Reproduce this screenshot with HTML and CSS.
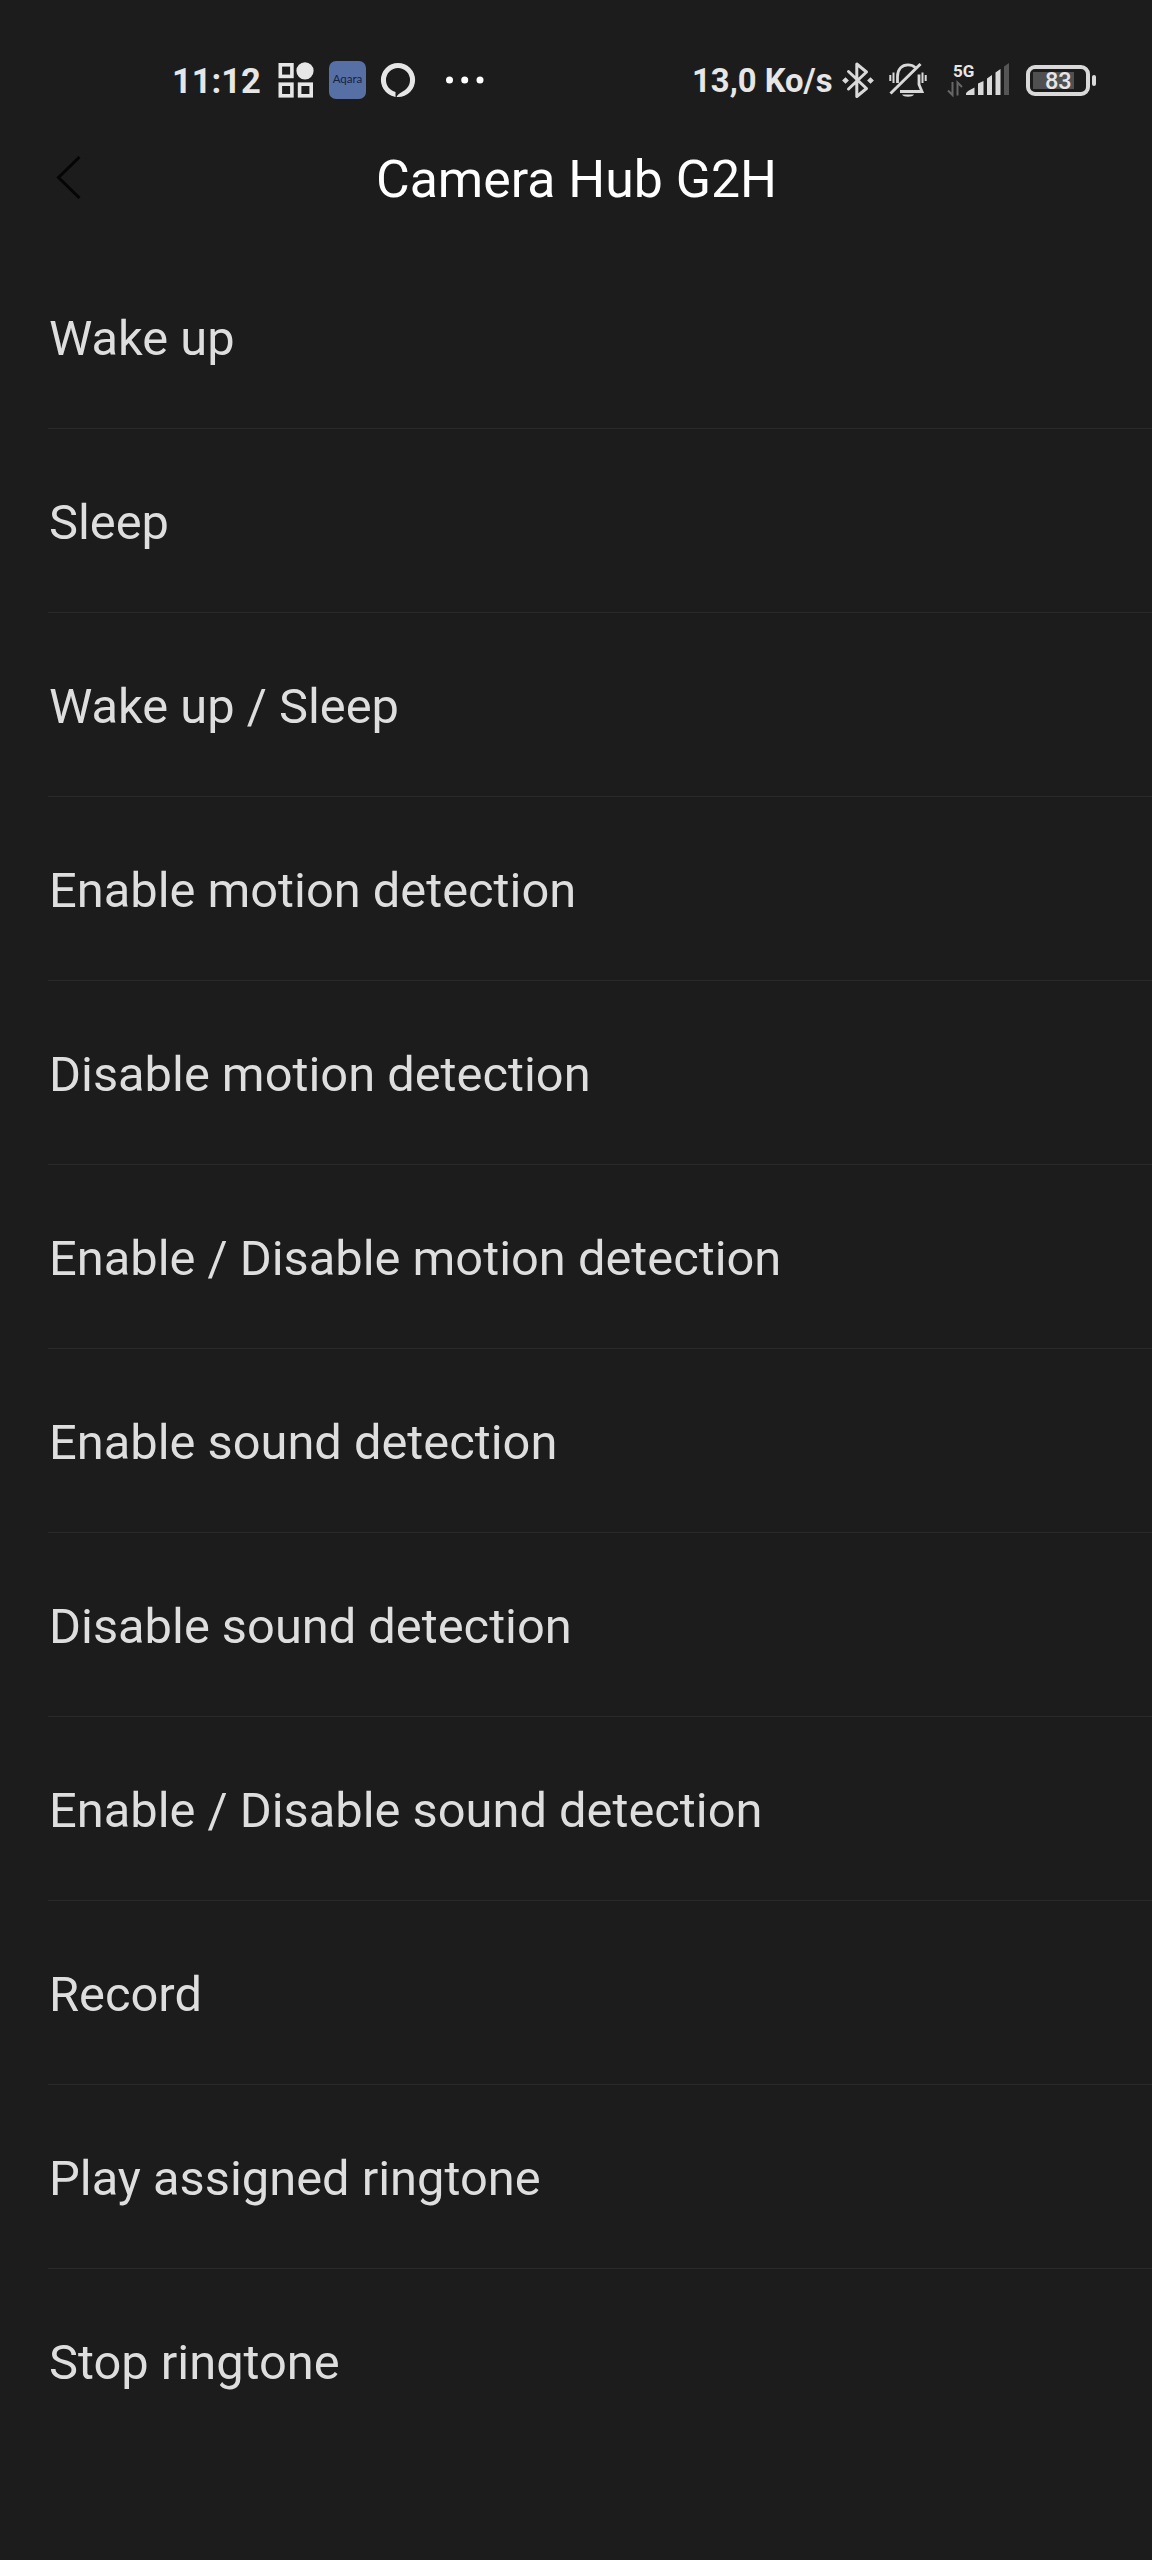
FILE: index.html
```html
<!DOCTYPE html>
<html lang="en">
<head>
    <meta charset="UTF-8">
    <meta name="viewport" content="width=device-width, initial-scale=1.0">
    <title>Camera Hub G2H</title>

    <link rel="stylesheet" href="styles.css">
</head>
<body>
    <div class="status-bar">
        <div class="status-left">
            <span class="time">11:12</span>
            <svg class="icon-apps" width="36" height="40" viewBox="0 0 36 40" fill="none" stroke="#e6e6e6" stroke-width="3.6">
                <rect x="2.3" y="4.8" width="11.6" height="11.6"/>
                <rect x="2.3" y="24.2" width="11.6" height="11.6"/>
                <rect x="21.6" y="24.2" width="11.6" height="11.6"/>
                <circle cx="27" cy="10.8" r="8.6" fill="#e6e6e6" stroke="none"/>
            </svg>
            <span class="icon-aqara">Aqara</span>
            <svg class="icon-ring" width="36" height="40" viewBox="0 0 36 40">
                <path fill="#e6e6e6" fill-rule="evenodd" d="M18 2.9a17.1 17.1 0 1 0 0 34.2a17.1 17.1 0 0 0 0-34.2zM18 8a12 12 0 0 1 12 12c0 6-4 10-8.5 12.2c-2.200 1.200-4 2.800-5 4.700h-1v-5C10 30.500 6 26 6 20A12 12 0 0 1 18 8z"/>
            </svg>
            <svg class="icon-dots" width="40" height="40" viewBox="0 0 40 40" fill="#fff">
                <circle cx="4.5" cy="20" r="3.5"/>
                <circle cx="19.7" cy="20" r="3.5"/>
                <circle cx="35" cy="20" r="3.5"/>
            </svg>
        </div>
        <div class="status-right">
            <span class="speed">13,0 Ko/s</span>
            <svg class="icon-bluetooth" width="34" height="40" viewBox="0 0 34 40" fill="none" stroke="#d9d9d9" stroke-width="3" stroke-linejoin="round" stroke-linecap="round">
                <path d="M7.5 11.5L25.5 28.5L15.8 36.5V4L25.5 12L7.5 29"/>
                <path fill="#d9d9d9" stroke="none" d="M4.5 17.2l3.4 3.3l-3.4 3.3l-3.4-3.3zM29.5 17.2l3.4 3.3l-3.4 3.3l-3.4-3.3z"/>
            </svg>
            <svg class="icon-mute" width="38" height="40" viewBox="0 0 38 40" fill="none" stroke="#d9d9d9" stroke-width="2.8">
                <path d="M8.5 23V16.5C8.5 9 13 4.8 19 4.8C22 4.8 24.5 5.8 26.3 7.5"/>
                <path d="M30 14.5V24.5L33 31.5H11"/>
                <path d="M1.5 33.5L31.5 4" stroke-width="3"/>
                <path d="M13 34.5h12c-1.5 3-10.5 3-12 0z" fill="#d9d9d9" stroke="none"/>
                <path d="M1.3 15v6M4.5 12.5v10.500M33.500 12.500v10.500M36.700 15v6" stroke-width="2"/>
            </svg>
            <div class="signal">
                <span class="network">5G</span>
                <svg width="64" height="40" viewBox="0 0 64 40">
                    <path fill="none" stroke="#666" stroke-width="2" d="M5.500 22v13l-4.500-4.500M10.500 35.500v-13l4.500 4.500"/>
                    <path fill="#d9d9d9" d="M19 35V33.500q0-2 8.500-6V35zM31 35V23.500l5.500-2.500V35zM40 35V18.500l5-3.500V35zM48.500 35V12.500l5-3.500V35z"/>
                    <path fill="#555" d="M57 35V6.500l5-3.500V35z"/>
                </svg>
            </div>
            <div class="battery"><span class="level">83</span></div>
        </div>
    </div>

    <div class="header">
        <svg class="back" width="26" height="44" viewBox="0 0 26 44" fill="none" stroke="#050505" stroke-width="3">
            <path d="M24.500 1L3.500 21.500L24.500 42"/>
        </svg>
        <h1>Camera Hub G2H</h1>
    </div>

    <ul class="actions">
        <li>Wake up</li>
        <li>Sleep</li>
        <li>Wake up / Sleep</li>
        <li>Enable motion detection</li>
        <li>Disable motion detection</li>
        <li>Enable / Disable motion detection</li>
        <li>Enable sound detection</li>
        <li>Disable sound detection</li>
        <li>Enable / Disable sound detection</li>
        <li>Record</li>
        <li>Play assigned ringtone</li>
        <li>Stop ringtone</li>
    </ul>
</body>
</html>
```
FILE: styles.css
```css
/* General Styles */
* {
    box-sizing: border-box;
}

body {
    margin: 0;
    min-height: 2560px;
    font-family: Roboto, sans-serif;
    background-color: #1c1c1c;
    color: #dedede;
}

/* Status Bar */
.status-bar {
    display: flex;
    justify-content: space-between;
    height: 100px;
    padding: 60px 56px 0 172px;
    color: #e6e6e6;
}

.status-left,
.status-right {
    display: flex;
    align-items: center;
    height: 40px;
}

.time,
.speed {
    padding-top: 2px;
    font-size: 34.5px;
    font-weight: bold;
    line-height: 40px;
    white-space: nowrap;
}

.time {
    width: 106px;
}

.speed {
    width: 149px;
    font-size: 32.8px;
}

.icon-aqara {
    width: 37px;
    height: 38px;
    margin: 0 14px 0 15px;
    border-radius: 7px;
    background-color: #566fa5;
    color: #17233f;
    font-family: Lato, sans-serif;
    font-size: 11.5px;
    line-height: 36px;
    text-align: center;
}

.icon-dots {
    margin-left: 29px;
}

.icon-mute {
    margin-left: 14px;
}

/* Signal */
.signal {
    position: relative;
    height: 40px;
    margin: 0 15px 0 20px;
}

.network {
    position: absolute;
    top: 1px;
    left: 6px;
    font-size: 17px;
    font-weight: bold;
    line-height: 20px;
}

/* Battery */
.battery {
    position: relative;
    width: 64px;
    height: 31px;
    margin-right: 6px;
    padding: 4px 3px 0;
    border: 4px solid #d9d9d9;
    border-radius: 9px;
    background: linear-gradient(#505050, #505050) 3px 3px / 41px 17px no-repeat;
}

.battery::after {
    content: "";
    position: absolute;
    top: 6px;
    right: -10px;
    width: 4px;
    height: 11px;
    border-radius: 2px;
    background-color: #d9d9d9;
}

.level {
    display: block;
    padding-left: 12px;
    font-size: 23.5px;
    font-weight: 500;
    line-height: 17px;
}

/* Header */
.header {
    display: grid;
    grid-template-columns: 26px 1fr 26px;
    align-items: center;
    height: 145px;
    padding: 11px 54px 0 55px;
}

.header h1 {
    margin: 3px 0 0;
    font-size: 51.8px;
    font-weight: normal;
    line-height: 60px;
    text-align: center;
    color: #fff;
}

/* Action List */
.actions {
    margin: 0;
    padding: 0 0 0 48px;
    list-style: none;
}

.actions li {
    height: 184px;
    border-bottom: 1px solid #292929;
    font-size: 48.8px;
    line-height: 188px;
    text-indent: 1px;
}

.actions li:last-child {
    border-bottom: none;
}
```
